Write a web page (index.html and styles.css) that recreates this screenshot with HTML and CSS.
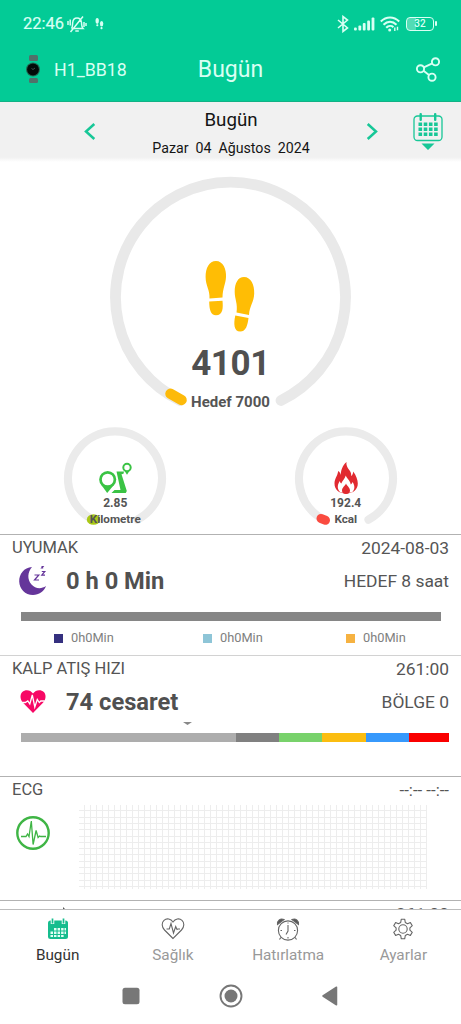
FILE: index.html
```html
<!DOCTYPE html>
<html lang="tr">
<head>
<meta charset="utf-8">
<title>Bugün</title>
<link rel="stylesheet" href="styles.css">
</head>
<body>
<div class="app">
  <header class="top">
    <div class="status">
      <div class="status-left">
        <span class="clock">22:46</span>
        <svg class="mute" width="20" height="18" viewBox="0 0 20 18" fill="none" stroke="currentColor" stroke-width="1.5"><path d="M4.500 13.500h11.500c-1.700-1.700-1.200-3.500-1.500-6C14.100 4.500 12.500 3 10 3S6 4.500 5.700 7.500c-.2 2.500 0 4.500-1.200 6M8.300 16h3.500M3.500 17L16 1.500M1 6v4M3.200 4.500v6M17 7v5M19 8v3"/></svg>
        <svg class="mini-steps" width="9" height="12" viewBox="0 0 9 12" fill="currentColor"><ellipse cx="2.200" cy="3" rx="1.700" ry="2.900"/><rect x="1.300" y="6.300" width="2" height="2" rx=".8"/><ellipse cx="6.600" cy="5.800" rx="1.700" ry="2.700"/><rect x="5.500" y="9" width="2" height="2.200" rx=".8"/></svg>
      </div>
      <div class="status-right">
        <svg width="12" height="18" viewBox="0 0 12 18" fill="none" stroke="currentColor" stroke-width="1.600"><path d="M1 5l9.500 8L6 16.500v-15L10.500 5 1 13"/></svg>
        <svg class="signal" width="21" height="14" viewBox="0 0 21 14" fill="currentColor"><rect x="0" y="10.500" width="2.800" height="3" rx="1"/><rect x="4.400" y="8.500" width="2.800" height="5" rx="1"/><rect x="8.800" y="6" width="2.800" height="7.500" rx="1"/><rect x="13.200" y="3.500" width="2.800" height="10" rx="1"/><rect x="17.600" y=".5" width="2.800" height="13" rx="1"/></svg>
        <svg class="wifi" width="20" height="16" viewBox="0 0 20 16" fill="none" stroke="currentColor" stroke-width="2.100"><path d="M.8 5.500c5.500-5.300 12.900-5.300 18.400 0M3.500 8.700c4-3.900 9-3.900 13 0M6.200 11.800c2.200-2.300 5.400-2.300 7.200-.6"/><circle cx="9.700" cy="14" r="1.500" fill="currentColor" stroke="none"/><path d="M14.800 11.500V15M17.500 10.800v3.500" stroke-width="1.400"/></svg>
        <div class="battery"><span>32</span></div>
      </div>
    </div>
    <div class="bar">
      <div class="device">
        <svg width="16" height="29" viewBox="0 0 16 29"><rect x="4" y="0" width="9" height="6" rx="1.500" fill="#50716a"/><rect x="4" y="23" width="9" height="5" rx="1.500" fill="#50716a"/><circle cx="8" cy="14.500" r="7" fill="#246a55"/><circle cx="8" cy="14.500" r="5.900" fill="#020b08"/><path d="M6.500 13.500l1.500 1 2-1.500" stroke="#52635e" stroke-width=".8" fill="none"/></svg>
        <span>H1_BB18</span>
      </div>
      <h1>Bugün</h1>
      <svg class="share" width="26" height="26" viewBox="0 0 26 26" fill="none" stroke="currentColor" stroke-width="1.900"><circle cx="20.500" cy="4.800" r="3.600"/><circle cx="5.500" cy="11.800" r="3.600"/><circle cx="17" cy="20.200" r="3.600"/><path d="M8.800 10.300l8.500-4M8.500 13.800l5.500 4.200"/></svg>
    </div>
  </header>

  <section class="date">
    <svg class="prev" width="12" height="18" viewBox="0 0 12 18" fill="none" stroke="currentColor" stroke-width="2.500"><path d="M10.300 1L2 8.500l8.300 7.500"/></svg>
    <div class="date-text"><strong>Bugün</strong><span>Pazar  04  Ağustos  2024</span></div>
    <svg class="next" width="12" height="18" viewBox="0 0 12 18" fill="none" stroke="currentColor" stroke-width="2.500"><path d="M1.700 1L10 8.500l-8.300 7.500"/></svg>
    <svg class="calendar" width="30" height="38" viewBox="0 0 30 38" fill="currentColor"><rect x="1" y="3" width="28" height="24.500" rx="3.500" fill="none" stroke="currentColor" stroke-width="1.300"/><rect x="6.500" y="0" width="2.400" height="8" rx="1"/><rect x="21" y="0" width="2.400" height="8" rx="1"/><path d="M5.500 9.500h3.600v3.600H5.500zm5.200 0h3.600v3.600h-3.600zm5.200 0h3.600v3.600h-3.600zm5.200 0h3.600v3.600h-3.600zM5.500 14.500h3.600v3.600H5.500zm5.200 0h3.600v3.600h-3.600zm5.200 0h3.600v3.600h-3.600zm5.200 0h3.600v3.600h-3.600zM5.500 19.500h3.600v3.600H5.500zm5.200 0h3.600v3.600h-3.600zm5.200 0h3.600v3.600h-3.600zm5.200 0h3.600v3.600h-3.600zM8.500 30.500h13L15 37z"/></svg>
  </section>

  <main>
    <div class="steps">
      <svg class="ring" width="242" height="242" viewBox="0 0 242 242" fill="none" stroke-linecap="round"><path d="M70 224.500A115 115 0 1 1 171 224.500" stroke="#e9e9e9" stroke-width="10.800"/><path d="M60.500 217.800L71.500 224" stroke="#fdba0a" stroke-width="10.500"/></svg>
      <div class="steps-body">
        <svg width="50" height="72" viewBox="0 0 50 72" fill="#ffbd05"><path d="M11 0c7 0 10.500 8 10 16-.3 7-3.300 11-3.500 20.500l-13 1C5 29 .7 25 .6 16 .6 7 4 0 11 0zM4.200 40.500l13.300-.8c.7 7 .5 14.500-6.500 14.500-5.500 0-6.700-6-6.800-13.700zM39 16c7 0 10.500 8 10.200 16.500C49 41 44.500 45 44 54l-12.500-2.500C33 43 29.700 38 29.700 31 29.700 22 33 16 39 16zM30.300 54.500L43.500 57c-.8 7-2.500 13.500-8.300 13.500-6.500 0-6.700-8-4.900-16z"/></svg>
        <strong>4101</strong>
        <span>Hedef 7000</span>
      </div>
    </div>

    <div class="mini-row">
      <div class="mini">
        <svg class="ring" width="104" height="104" viewBox="0 0 104 104" fill="none" stroke-linecap="round"><path d="M29.500 92.700A47 47 0 1 1 74.500 92.700" stroke="#ebebeb" stroke-width="8.200"/><ellipse cx="30.500" cy="92.500" rx="6.700" ry="5.300" fill="#aac815"/></svg>
        <div class="mini-body">
          <svg width="34" height="33" viewBox="0 0 34 33" fill="#3ac344"><path d="M18.500 9.500H26l-.5 2.200-2 .6L28.800 29l-1 2H13.500l3-3h6z"/><path d="M3 22.500L9.200 31l7-8.500z"/><path d="M26 8l3 4.800L32 8z"/><circle cx="9.700" cy="17.500" r="7.200" fill="#fff" stroke="#3ac344" stroke-width="2.700"/><circle cx="29" cy="5.500" r="3.700" fill="#fff" stroke="#3ac344" stroke-width="2"/></svg>
          <b>2.85</b><em>Kilometre</em>
        </div>
      </div>
      <div class="mini">
        <svg class="ring" width="104" height="104" viewBox="0 0 104 104" fill="none" stroke-linecap="round"><path d="M29.500 92.700A47 47 0 1 1 74.500 92.700" stroke="#ebebeb" stroke-width="8.200"/><path d="M27 91.500l4.500 1.800" stroke="#fa4b40" stroke-width="9"/></svg>
        <div class="mini-body">
          <svg width="34" height="33" viewBox="0 0 34 33"><path d="M17.500 0c-.5 4 1.500 6 3.500 9 1 1.500 1.300 3 1.200 5 1.300-1 2-2.600 2-4.500 3 4 4.600 8.500 4.600 12 0 6-4.500 10-11.800 10S5.500 27.500 5.500 21.500c0-5 3-7.200 3.700-12.500 1.500 1 2.300 2.500 2.500 4C12 8 13.500 3.500 17.500 0z" fill="#e12a30"/><path d="M16.800 13.500c-1 3.500-3.500 5-4.500 8-1-.6-1.200-1.500-1.500-2.500-3 4.500-2.500 8.500.7 11.500h11.500c3.200-3 3-7 .5-10.500-.4 1.300-.8 2-1.800 2.500-.3-4-3.800-5.500-4.900-9z" fill="#fff"/><path d="M17 21.500c-1 2.500-4 4-4 7 0 2 1.500 3.500 4 3.500s4-1.500 4-3.500c0-3-3-4.500-4-7z" fill="#e12a30"/></svg>
          <b>192.4</b><em>Kcal</em>
        </div>
      </div>
    </div>

    <section class="card">
      <div class="head"><span>UYUMAK</span><time>2024-08-03</time></div>
      <div class="value-row">
        <svg class="icon moon" width="34" height="34" viewBox="0 0 34 34"><path d="M15 3C7 3.500 2 10 2.200 17.500 2.500 25 8 31 16 31c6 0 11-3.500 13-9-5 3.500-11 2.500-14.500-1.500C10 15.500 10.500 8 15 3z" fill="#65359a"/><path d="M17.500 11h4.300l-4.300 5h4.500M24.800 7.500h3l-3 3.700h3.200M24.500 2.500h1.500l-1.300 1.500h1.500" fill="none" stroke="#65359a" stroke-width="1.200"/></svg>
        <strong>0 h 0 Min</strong><span>HEDEF 8 saat</span>
      </div>
      <div class="sleep-bar"></div>
      <div class="legend"><span class="deep">0h0Min</span><span class="light">0h0Min</span><span class="awake">0h0Min</span></div>
    </section>

    <section class="card faint">
      <div class="head"><span>KALP ATIŞ HIZI</span><time>261:00</time></div>
      <div class="value-row">
        <svg class="icon" width="34" height="34" viewBox="0 0 34 34"><path d="M16 28L6 17.800C3 14.500 2.700 9.500 5.300 7c3-3 8.200-2.300 10.700 1.500C18.500 4.700 23.800 4 26.800 7c2.700 2.700 2.200 7.600-.8 10.800z" fill="#f70865"/><path d="M4 17.500h4.300l2.500-1.500 2 3 2.500-9 2.500 12 2.500-7.500 2 3 1.500-1.500h4" fill="none" stroke="#fff" stroke-width="1.300"/></svg>
        <strong>74 cesaret</strong><span>BÖLGE 0</span>
      </div>
      <svg class="marker" width="9" height="3" viewBox="0 0 9 3"><path d="M0 0h9L4.500 3z" fill="#888"/></svg>
      <div class="zones"><i class="z0"></i><i class="z1"></i><i class="z2"></i><i class="z3"></i><i class="z4"></i><i class="z5"></i></div>
    </section>

    <section class="card ecg">
      <div class="head"><span>ECG</span><time class="empty">--:-- --:--</time></div>
      <div class="ecg-body">
        <svg width="34" height="34" viewBox="0 0 34 34" fill="none" stroke="#3fb545"><circle cx="17" cy="17" r="15.700" stroke-width="2.400"/><path d="M5 20.500h5l1.500-2.500 1.500 2.500 2.300-15.500 1.800 23.500 3-14 2 7 1.500-1.500 1 .5H30" stroke-width="1.300"/></svg>
        <div class="grid"></div>
      </div>
    </section>

    <section class="card cut">
      <div class="head"><span><svg width="4" height="4" viewBox="0 0 4 4"><path d="M1 0l3 3H1z" fill="#555"/></svg></span><time>261:00</time></div>
    </section>
  </main>

  <nav class="tabs">
    <a class="active"><svg width="24" height="24" viewBox="0 0 24 24"><rect x="2" y="3.500" width="20" height="18.500" rx="2.500" fill="#16bd8e"/><path d="M6.500 1v6M17.500 1v6" stroke="#fff" stroke-width="3.500"/><path d="M6.500 1.500v5M17.500 1.500v5" stroke="#16bd8e" stroke-width="1.700"/><path d="M8 11h2.500v2.500H8zm3.600 0H14v2.500h-2.400zm3.500 0h2.500v2.500h-2.500zm3.400 0H20v2.500h-1.500zM4.500 14.500H7V17H4.500zm3.500 0h2.500V17H8zm3.600 0H14V17h-2.400zm3.500 0h2.500V17h-2.500zm3.400 0H20V17h-1.500zM4.500 18H7v2H4.500zM8 18h2.500v2H8zm3.600 0H14v2h-2.400zm3.500 0h2.500v2h-2.500z" fill="#e2fff5"/></svg><span>Bugün</span></a>
    <a><svg width="24" height="24" viewBox="0 0 24 24" fill="none" stroke="#666" stroke-width="1.100"><path d="M12 21.500L3.500 13C.5 10 .5 5.500 3 3.300 5.800.8 9.800 1.700 12 5c2.200-3.300 6.200-4.200 9-1.700 2.500 2.200 2.500 6.700-.5 9.700z"/><path d="M5.500 12h2.800L10 6.500l2.500 9.500 2.200-6.500 1.300 3 .8-.5h2.200"/></svg><span>Sağlık</span></a>
    <a><svg width="24" height="24" viewBox="0 0 24 24" fill="none" stroke="#666" stroke-width="1.100"><circle cx="12" cy="13.500" r="9.600"/><path d="M1.500 7.500C1 3.500 4.500.8 8 2.500zM22.500 7.500C23 3.500 19.500.8 16 2.500z" fill="#555"/><path d="M12 8v6l-2 3.500M12 5.500v1M12 20v1.500M4.500 13.500H6M18 13.500h1.500M4.800 20.500l-1.300 2M19.200 20.500l1.300 2"/></svg><span>Hatırlatma</span></a>
    <a><svg width="24" height="24" viewBox="0 0 24 24" fill="none" stroke="#666" stroke-width="1.100"><circle cx="12" cy="12" r="4.200"/><path d="M10.300 2.200h3.400l.6 3.300 2.200 1.300 2.900-1.200 1.900 3.100-2.400 2.100v2.400l2.400 2.100-1.900 3.100-2.900-1.200-2.200 1.300-.6 3.300h-3.400l-.6-3.300-2.200-1.300-2.900 1.200-1.900-3.100 2.400-2.100v-2.400l-2.400-2.100 1.900-3.100 2.900 1.200 2.200-1.300z" stroke-linejoin="round"/></svg><span>Ayarlar</span></a>
  </nav>
  <div class="system">
    <svg width="18" height="18" viewBox="0 0 18 18"><rect x=".5" y=".7" width="17" height="16.500" rx="2.500" fill="#777"/></svg>
    <svg width="24" height="24" viewBox="0 0 24 24"><circle cx="12" cy="12" r="10.500" fill="none" stroke="#777" stroke-width="1.900"/><circle cx="12" cy="12" r="6.500" fill="#777"/></svg>
    <svg width="16" height="20" viewBox="0 0 16 20"><path d="M14.500 1.200v17.600L1 10z" fill="#777" stroke="#777" stroke-linejoin="round" stroke-width="1.500"/></svg>
  </div>
</div>
</body>
</html>
```
FILE: styles.css
```css
* { box-sizing: border-box; }
body { margin: 0; background: #fff; font-family: Roboto, "Liberation Sans", sans-serif; color: #555; }
svg { display: block; flex: none; }
.app { width: 461px; height: 1024px; display: flex; flex-direction: column; overflow: hidden; }

.top { height: 102px; background: #03cb96; color: #d9fff3; border-bottom: 1px solid #12b286; }
.status { height: 47px; display: flex; justify-content: space-between; padding: 0 25px 0 23px; }
.status-left, .status-right { display: flex; align-items: center; }
.clock { font-size: 16.500px; -webkit-text-stroke: .2px currentColor; }
.mute { margin-left: 3px; }
.mini-steps { margin-left: 8px; }
.signal { margin-left: 5px; }
.wifi { margin-left: 5px; }
.battery { position: relative; width: 28px; height: 14px; margin: 0 2px 0 6px; border: 1.500px solid currentColor; border-radius: 4px; background: linear-gradient(90deg, #52dcb5 33%, transparent 33%); font-size: 10px; font-weight: 500; line-height: 12.500px; text-align: center; }
.battery::after { content: ""; position: absolute; right: -4px; top: 3px; width: 2px; height: 5px; border-radius: 1px; background: currentColor; }
.bar { height: 45px; display: grid; grid-template-columns: 1fr auto 1fr; align-items: center; padding: 0 20px 0 25px; }
.device { display: flex; align-items: center; gap: 13px; font-size: 17.800px; }
.bar h1 { margin: 0 3px 0 -2px; font-size: 23px; font-weight: 400; }
.share { justify-self: end; }

.date { height: 60px; padding: 0 18px 0 84px; display: flex; align-items: center; background: linear-gradient(#f1f1f1 92%, #fff); color: #17c797; }
.date-text { width: 270px; text-align: center; color: #151515; display: flex; flex-direction: column; padding-top: 3px; }
.date-text strong { font-size: 18.700px; font-weight: 400; line-height: 28px; }
.date-text span { font-size: 14.200px; line-height: 28px; white-space: pre; }
.calendar { margin-left: auto; }

main { height: 747px; overflow: hidden; }
.steps { height: 265px; padding-top: 14px; display: grid; justify-items: center; align-items: start; }
.steps > *, .mini > * { grid-area: 1 / 1; }
.steps-body { display: flex; flex-direction: column; align-items: center; padding-top: 85px; }
.steps-body strong { margin-top: 8px; font-size: 35px; line-height: 46px; letter-spacing: -.4px; color: #505050; }
.steps-body span { margin-top: 5px; font-size: 15px; line-height: 20px; font-weight: 700; }
.mini-row { height: 107px; display: flex; justify-content: space-around; }
.mini { display: grid; width: 104px; justify-items: center; align-items: start; }
.mini-body { display: flex; flex-direction: column; align-items: center; padding-top: 35px; }
.mini b { font-size: 12px; line-height: 16px; font-weight: 700; }
.mini em { font-size: 11.700px; line-height: 16px; font-style: normal; font-weight: 700; }

.card { height: 121px; border-top: 1px solid #b2b2b2; }
.card.faint { border-top-color: #d2d2d2; }
.head { height: 27px; padding: 0 12px 2px; display: flex; justify-content: space-between; align-items: center; font-size: 16.500px; }
.head time { font-size: 17.400px; }
.value-row { height: 38px; display: flex; align-items: center; padding: 0 12px 0 17px; }
.value-row strong { margin-left: 15px; font-size: 23.700px; color: #505050; }
.value-row span { margin-left: auto; font-size: 17.400px; }
.sleep-bar { height: 9px; width: 420px; margin: 12px 0 0 21px; background: #868686; }
.legend { display: grid; grid-template-columns: 149px 143px auto; padding: 8px 0 0 54px; font-size: 12.800px; line-height: 18px; color: #808080; }
.legend span { display: flex; align-items: center; gap: 8px; }
.legend span::before { content: ""; width: 9px; height: 9px; background: #35307f; }
.legend .light::before { background: #8ec5d7; }
.legend .awake::before { background: #f6b241; }
.marker { margin: 1px 0 0 183px; }
.zones { display: grid; grid-template-columns: 214.500px 43.500px 43px 43.500px 43.500px 40px; height: 9px; margin: 8px 0 0 21px; }
.z0 { background: #adadad; }
.z1 { background: #808080; }
.z2 { background: #78d26b; }
.z3 { background: #fbbd10; }
.z4 { background: #3799fc; }
.z5 { background: #fa0000; }
.ecg { height: 124px; }
.head .empty { font-size: 16.800px; }
.ecg-body { display: flex; padding: 0 0 0 16px; align-items: flex-start; }
.ecg-body > svg { margin-top: 12px; }
.grid { width: 348px; height: 84px; margin: 1px 0 0 29px; background: repeating-linear-gradient(90deg, transparent 0 5px, #ededed 5px 6px), repeating-linear-gradient(transparent 0 5.300px, #ededed 5.300px 6.300px); }
.cut { height: 30px; }
.cut .head { align-items: flex-start; padding-top: 3px; }
.cut .head svg { margin: 3px 0 0 50px; }

.tabs { height: 59px; border-top: 1px solid #bcbcbc; display: grid; grid-template-columns: repeat(4, 1fr); color: #999; background: #fff; }
.tabs a { display: flex; flex-direction: column; align-items: center; padding-top: 7px; font-size: 15.300px; line-height: 20px; }
.tabs span { margin-top: 4px; }
.tabs .active { color: #333; }
.system { height: 56px; display: flex; align-items: center; padding: 0 123px 0 122px; justify-content: space-between; }
```
